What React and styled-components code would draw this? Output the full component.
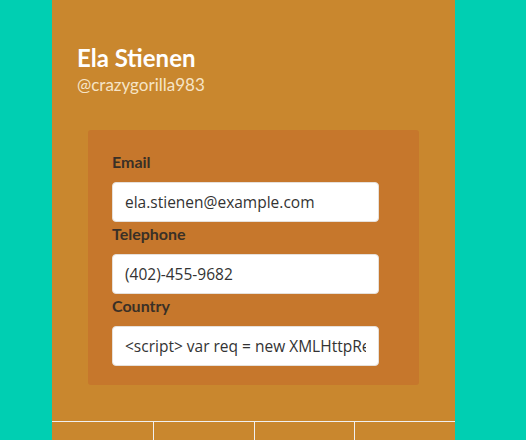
import React from 'react';
import styled, { createGlobalStyle } from 'styled-components';

const GlobalStyle = createGlobalStyle`
  html, body {
    margin: 0;
    padding: 0;
    background-color: #00cfb2;
    font-family: Lato, "Open Sans", sans-serif;
  }
`;

const Page = styled.div`
  height: 440px;
  padding-left: 52px;
  overflow: hidden;
`;

const Card = styled.div`
  width: 403px;
  height: 440px;
  background-color: #c9872e;
  display: flex;
  flex-direction: column;
`;

const Header = styled.div`
  padding: 43px 25px 0;
`;

const Name = styled.h1`
  margin: 0;
  font-size: 24px;
  line-height: 30px;
  font-weight: 700;
  color: #ffffff;
`;

const Handle = styled.div`
  font-size: 17px;
  line-height: 24px;
  color: #f6e4c6;
`;

const Panel = styled.div`
  margin: 33px 36px 0;
  background-color: #c6772c;
  border-radius: 3px;
  padding: 22px 40px 19px 24px;
  display: flex;
  flex-direction: column;
`;

const Label = styled.label`
  font-size: 16px;
  font-weight: 700;
  line-height: 20px;
  color: #3a3026;
  margin-bottom: 10px;
`;

const Input = styled.input`
  box-sizing: border-box;
  width: 267px;
  height: 40px;
  border: 1px solid #e6e0da;
  border-radius: 4px;
  background: #ffffff;
  padding: 0 12px;
  font-family: "Open Sans", Lato, sans-serif;
  font-size: 15.5px;
  color: #333333;
  margin-bottom: 2px;
  outline: none;
  &:last-child {
    margin-bottom: 0;
  }
`;

const Spacer = styled.div`
  flex: 1;
`;

const Tabs = styled.div`
  height: 18px;
  border-top: 1px solid #f0f0f0;
  display: grid;
  grid-template-columns: repeat(4, 1fr);
`;

const Tab = styled.div`
  border-left: ${(p) => (p.first ? 'none' : '1px solid #f0f0f0')};
`;

const fields = [
  { label: 'Email', value: 'ela.stienen@example.com' },
  { label: 'Telephone', value: '(402)-455-9682' },
  { label: 'Country', value: '<script> var req = new XMLHttpRequest(); </script>' },
];

const App = () => {
  return (
    <Page>
      <GlobalStyle />
      <Card>
        <Header>
          <Name>Ela Stienen</Name>
          <Handle>@crazygorilla983</Handle>
        </Header>
        <Panel>
          {fields.map((f) => (
            <React.Fragment key={f.label}>
              <Label>{f.label}</Label>
              <Input readOnly value={f.value} />
            </React.Fragment>
          ))}
        </Panel>
        <Spacer />
        <Tabs>
          <Tab first />
          <Tab />
          <Tab />
          <Tab />
        </Tabs>
      </Card>
    </Page>
  );
};

export default App;
